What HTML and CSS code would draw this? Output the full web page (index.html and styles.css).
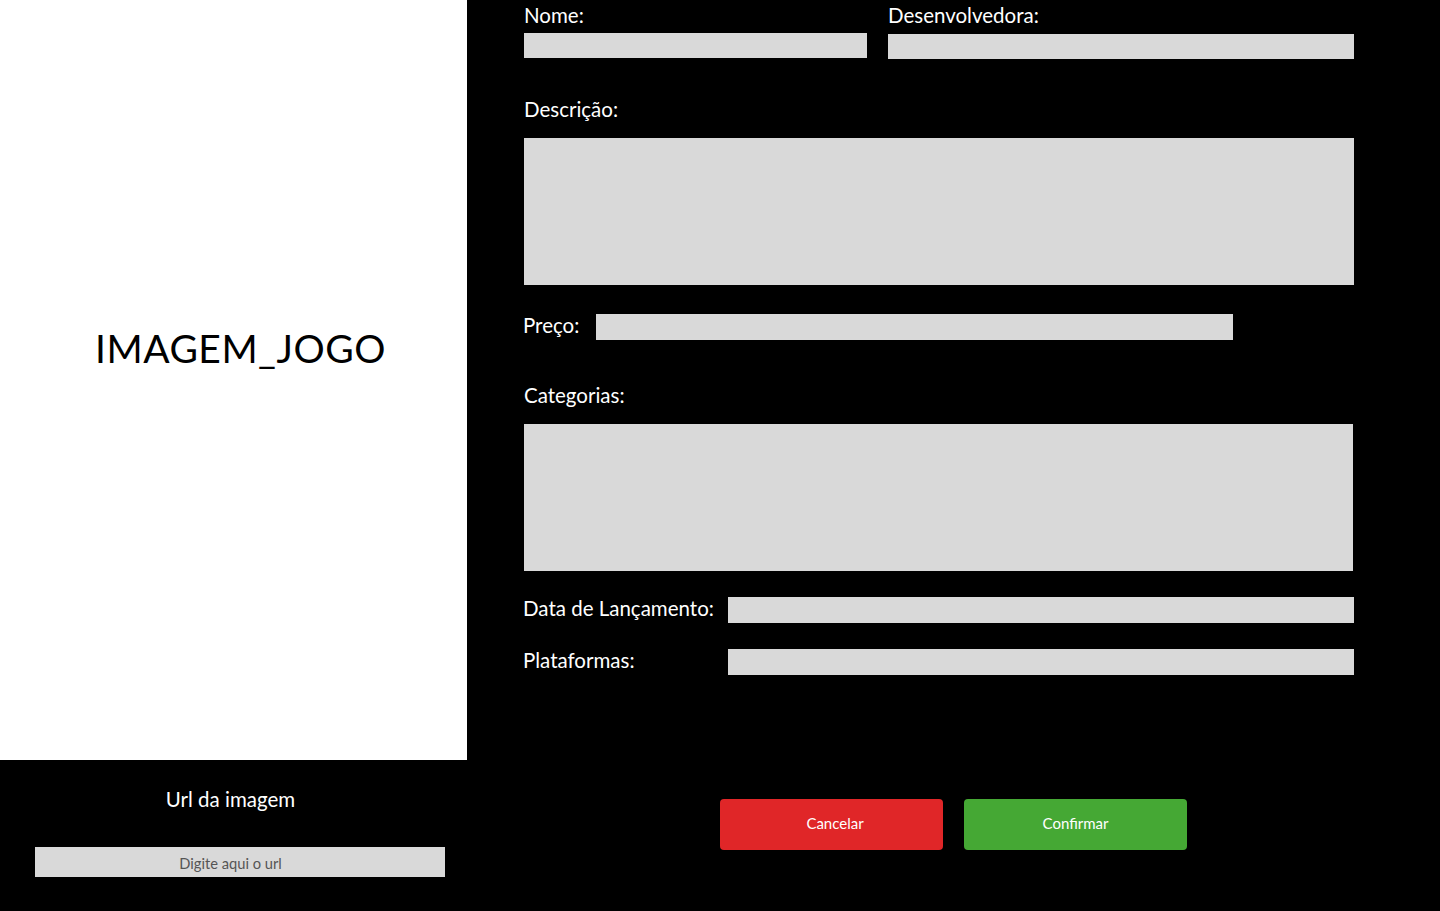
FILE: index.html
```html
<!DOCTYPE html>
<html lang="pt-BR">
<head>
<meta charset="utf-8">
<title>Cadastro de Jogo</title>
<link rel="stylesheet" href="styles.css">
</head>
<body>
<div class="page">
  <aside class="left">
    <div class="image-box">
      <span class="image-text">IMAGEM_JOGO</span>
    </div>
    <div class="url-section">
      <div class="url-label">Url da imagem</div>
      <div class="url-input">Digite aqui o url</div>
    </div>
  </aside>
  <main class="form">
    <div class="row-two">
      <div class="field field-nome">
        <div class="label">Nome:</div>
        <div class="input"></div>
      </div>
      <div class="field field-dev">
        <div class="label">Desenvolvedora:</div>
        <div class="input input-dev"></div>
      </div>
    </div>
    <div class="label label-desc">Descrição:</div>
    <div class="area"></div>
    <div class="row-price">
      <div class="label-inline label-price">Preço:</div>
      <div class="input input-price"></div>
    </div>
    <div class="label label-cat">Categorias:</div>
    <div class="area area-cat"></div>
    <div class="row-grid row-data">
      <div class="label-inline">Data de Lançamento:</div>
      <div class="input"></div>
    </div>
    <div class="row-grid row-plat">
      <div class="label-inline">Plataformas:</div>
      <div class="input"></div>
    </div>
    <div class="buttons">
      <div class="btn btn-cancel">Cancelar</div>
      <div class="btn btn-confirm">Confirmar</div>
    </div>
  </main>
</div>
</body>
</html>
```

FILE: styles.css
```css
html, body {
  margin: 0;
  padding: 0;
  background: #000;
}
body {
  font-family: "Lato", "Open Sans", sans-serif;
  color: #fff;
}
.page {
  display: flex;
  width: 1440px;
  height: 911px;
  overflow: hidden;
}
.left {
  width: 467px;
  flex: none;
  display: flex;
  flex-direction: column;
}
.image-box {
  height: 760px;
  background: #fff;
  display: flex;
  justify-content: center;
  padding-left: 14px;
  box-sizing: border-box;
}
.image-text {
  margin-top: 325px;
  height: 46px;
  line-height: 46px;
  font-size: 39px;
  color: #000;
  letter-spacing: 0.5px;
}
.url-section {
  display: flex;
  flex-direction: column;
  align-items: center;
}
.url-label {
  margin-top: 27px;
  height: 24px;
  line-height: 24px;
  font-size: 20.5px;
  margin-right: 6px;
}
.url-input {
  margin-top: 36px;
  margin-left: 13px;
  width: 410px;
  height: 30px;
  line-height: 32px;
  background: #d9d9d9;
  color: #555;
  font-size: 14.7px;
  text-align: center;
  box-sizing: border-box;
  padding-right: 19px;
}
.form {
  flex: 1;
  padding: 0 86px 0 57px;
  display: flex;
  flex-direction: column;
}
.row-two {
  display: flex;
  gap: 21px;
}
.field {
  display: flex;
  flex-direction: column;
}
.field-nome { width: 343px; }
.field-dev { flex: 1; }
.label {
  height: 30px;
  line-height: 30px;
  font-size: 20.5px;
  margin-top: 0;
  margin-bottom: 3px;
}
.input {
  height: 25px;
  background: #d9d9d9;
}
.input-dev { margin-top: 1px; }
.label-desc {
  margin-top: 35px;
  margin-bottom: 14px;
}
.area {
  height: 147px;
  background: #d9d9d9;
}
.row-price {
  margin-top: 29px;
  display: flex;
  align-items: center;
}
.label-inline {
  font-size: 20.5px;
  margin-left: -1px;
  line-height: 20px;
  margin-bottom: 4px;
}
.label-price {
  width: 73px;
}
.input-price {
  width: 637px;
  height: 26px;
}
.label-cat {
  margin-top: 40px;
  margin-bottom: 14px;
}
.area-cat {
  margin-right: 1px;
}
.row-grid {
  display: grid;
  grid-template-columns: 204px 1fr;
  align-items: center;
}
.row-grid .input { height: 26px; }
.row-data { margin-top: 26px; }
.row-plat { margin-top: 26px; }
.buttons {
  margin-top: 124px;
  margin-left: 196px;
  display: flex;
  gap: 21px;
}
.btn {
  width: 223px;
  height: 51px;
  line-height: 49px;
  border-radius: 4px;
  font-size: 15px;
  text-align: center;
  color: #fff;
}
.btn-cancel {
  background: #e02628;
  text-indent: 7px;
}
.btn-confirm {
  background: #45a834;
}
```
